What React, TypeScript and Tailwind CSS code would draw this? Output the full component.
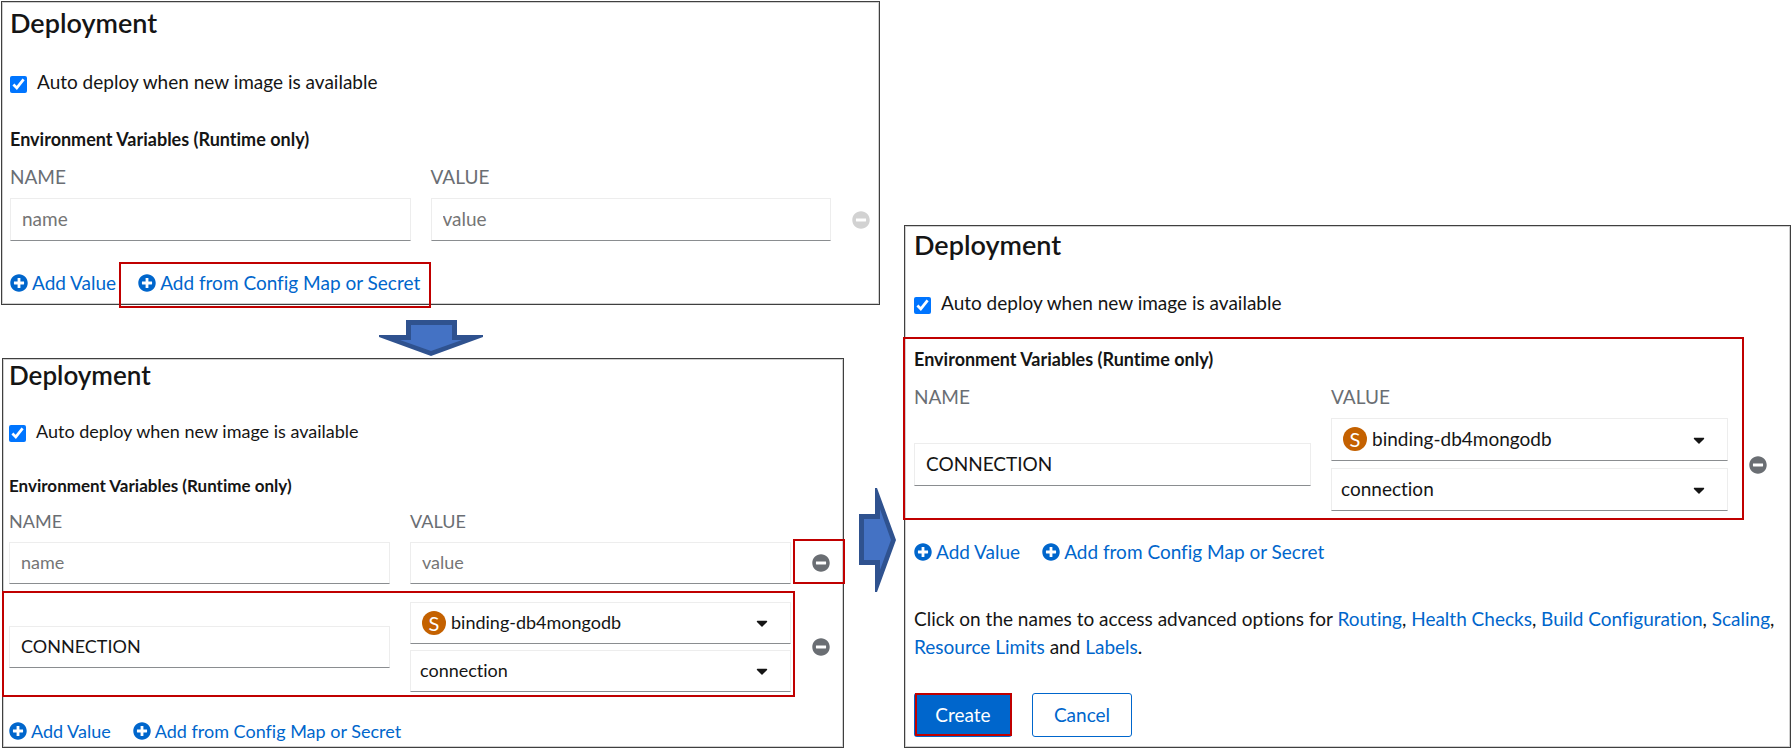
import type { ReactNode } from "react";
import { FaCaretDown, FaMinusCircle, FaPlusCircle } from "react-icons/fa";

type Size = "lg" | "md";

const fieldBox =
  "w-full min-w-0 rounded-none border border-[#ededed] border-b-[#8a8d90] bg-white pb-0.5 text-[#151515] placeholder:text-[#757575] outline-none";
const fieldHeight = { lg: "h-[43px]", md: "h-[42px]" };

function Highlight({ className }: { className: string }) {
  return <span aria-hidden="true" className={"pointer-events-none absolute z-10 border-2 border-[#c00000] " + className} />;
}

function Panel({ size, className, children }: { size: Size; className: string; children: ReactNode }) {
  const text = size === "lg" ? "text-[19px]" : "text-[18px]";
  return (
    <section className={"border border-[#3f3f3f] leading-7 shadow-[inset_0_0_0_1px_#d0d0d0] " + text + " " + className}>
      {children}
    </section>
  );
}

function Title({ size }: { size: Size }) {
  return (
    <h2 className={"font-semibold leading-8 " + (size === "lg" ? "text-[27px]" : "text-[26px]")}>Deployment</h2>
  );
}

function AutoDeploy({ id, className }: { id: string; className: string }) {
  return (
    <div className={"flex items-start gap-2.5 " + className}>
      <input id={id} type="checkbox" defaultChecked className="mt-2 size-[17px] accent-[#0075ff]" />
      <label htmlFor={id}>Auto deploy when new image is available</label>
    </div>
  );
}

function EnvHeading({ size, className }: { size: Size; className: string }) {
  return (
    <h3 className={"font-bold " + (size === "lg" ? "text-[18px] " : "text-[17px] ") + className}>
      Environment Variables (Runtime only)
    </h3>
  );
}

function Row({ cell, className, children }: { cell: string; className: string; children: ReactNode }) {
  return <div className={"relative grid items-center " + cell + " " + className}>{children}</div>;
}

function ColumnLabels({ cell, id, className }: { cell: string; id: string; className: string }) {
  return (
    <Row cell={cell} className={"text-[#6a6e73] " + className}>
      <label htmlFor={id + "-name"}>NAME</label>
      <label htmlFor={id + "-value"}>VALUE</label>
    </Row>
  );
}

function RemoveButton({ disabled, children }: { disabled?: boolean; children?: ReactNode }) {
  return (
    <div className="relative -ml-5 flex h-full items-center pl-[21px]">
      <button
        type="button"
        aria-label="Remove"
        disabled={disabled}
        className={"text-[18px] " + (disabled ? "text-[#d2d2d2]" : "text-[#6a6e73]")}
      >
        <FaMinusCircle />
      </button>
      {children}
    </div>
  );
}

function SelectField({ id, label, value, badge, size }: { id?: string; label: string; value: string; badge?: string; size: Size }) {
  return (
    <div className="relative">
      <select
        id={id}
        aria-label={label}
        className={fieldBox + " appearance-none pr-12 " + fieldHeight[size] + (badge ? " pl-10" : " pl-[9px]")}
      >
        <option>{value}</option>
      </select>
      {badge && (
        <span className="pointer-events-none absolute inset-y-0 left-3 flex items-center pb-px">
          <span className="flex size-6 items-center justify-center rounded-full bg-[#c46100] text-[20px] leading-none text-white">
            {badge}
          </span>
        </span>
      )}
      <FaCaretDown className="pointer-events-none absolute right-5 top-1/2 -translate-y-1/2 text-[18px]" />
    </div>
  );
}

function AddLinks({ className, highlight }: { className: string; highlight?: boolean }) {
  return (
    <div className={"flex gap-[22px] text-[#0066cc] " + className}>
      <button type="button" className="flex items-center gap-1">
        <FaPlusCircle className="text-[18px]" />
        Add Value
      </button>
      <button type="button" className="relative flex items-center gap-1">
        <FaPlusCircle className="text-[18px]" />
        Add from Config Map or Secret
        {highlight && <Highlight className="-bottom-[11px] -left-[19px] -right-[11px] -top-[7px]" />}
      </button>
    </div>
  );
}

function A({ children }: { children: ReactNode }) {
  return (
    <a href="#" className="text-[#0066cc]">
      {children}
    </a>
  );
}

const cellsA = "grid-cols-[1fr_1fr_28px] gap-x-5";
const cellsB = "grid-cols-[1fr_1fr_32px] gap-x-5";
const cellsC = "grid-cols-[1fr_1fr_42px] gap-x-5";

export default function App() {
  return (
    <main className="grid grid-cols-[minmax(0,843fr)_minmax(0,36fr)_minmax(0,24fr)_minmax(0,887fr)] bg-white px-px pt-px font-[Lato,sans-serif] text-[#151515] [font-variant-ligatures:none]">
      <Panel size="lg" className="col-span-2 pb-[7px] pl-2 pt-[5px]">
        <Title size="lg" />
        <AutoDeploy id="a-auto" className="mt-[29px]" />
        <EnvHeading size="lg" className="mt-[29px]" />
        <ColumnLabels cell={cellsA} id="a" className="mt-2.5" />
        <Row cell={cellsA} className="mt-[7px]">
          <input id="a-name" placeholder="name" className={fieldBox + " h-[43px] px-[11px]"} />
          <input id="a-value" placeholder="value" className={fieldBox + " h-[43px] px-[11px]"} />
          <RemoveButton disabled />
        </Row>
        <AddLinks className="mt-7" highlight />
      </Panel>

      <div className="col-start-1 row-start-2 flex justify-center pb-0.5 pl-4 pt-[15px]">
        <svg width="104" height="36" viewBox="0 0 104 36" aria-hidden="true">
          <path d="M27 0H78V15H104V17L52 36L0 17V15H27Z" fill="#2f528f" />
          <path d="M32 5H73V20H83L52 31L21 20H32Z" fill="#4472c4" />
        </svg>
      </div>

      <Panel size="md" className="col-start-1 row-start-3 ml-px pb-0.5 pl-1.5">
        <Title size="md" />
        <AutoDeploy id="b-auto" className="mt-[26px]" />
        <EnvHeading size="md" className="mt-[27px]" />
        <ColumnLabels cell={cellsB} id="b" className="mt-[7px]" />
        <Row cell={cellsB} className="mt-[7px]">
          <input id="b-name" placeholder="name" className={fieldBox + " h-[42px] px-[11px]"} />
          <input id="b-value" placeholder="value" className={fieldBox + " h-[42px] px-[11px]"} />
          <RemoveButton>
            <Highlight className="-right-0.5 -top-[3px] bottom-0 left-0.5" />
          </RemoveButton>
        </Row>
        <Row cell={cellsB} className="mt-[18px]">
          <input aria-label="Name" defaultValue="CONNECTION" className={fieldBox + " h-[42px] px-[11px]"} />
          <div className="grid gap-1.5">
            <SelectField size="md" label="Resource" value="binding-db4mongodb" badge="S" />
            <SelectField size="md" label="Key" value="connection" />
          </div>
          <RemoveButton />
          <Highlight className="-bottom-[5px] -left-[7px] -top-[11px] right-12" />
        </Row>
        <AddLinks className="mt-[25px]" />
      </Panel>

      <div className="col-span-2 col-start-2 row-start-3 flex items-center justify-center pb-[26px] pl-1.5">
        <svg width="37" height="104" viewBox="0 0 37 104" aria-hidden="true">
          <path d="M0 26H16V0H18L37 52L18 104H16V77H0Z" fill="#2f528f" />
          <path d="M5 31H21V21L32 52L21 82V72H5Z" fill="#4472c4" />
        </svg>
      </div>

      <Panel size="lg" className="col-start-4 row-span-3 row-start-1 self-end pb-2.5 pl-[9px] pt-[3px]">
        <Title size="lg" />
        <AutoDeploy id="c-auto" className="mt-7" />
        <div className="relative mt-7">
          <EnvHeading size="lg" className="" />
          <ColumnLabels cell={cellsC} id="c" className="mt-2.5" />
          <Row cell={cellsC} className="mt-[7px]">
            <input id="c-name" defaultValue="CONNECTION" className={fieldBox + " h-[43px] px-[11px]"} />
            <div className="grid gap-[7px]">
              <SelectField size="lg" id="c-value" label="Resource" value="binding-db4mongodb" badge="S" />
              <SelectField size="lg" label="Key" value="connection" />
            </div>
            <RemoveButton />
          </Row>
          <Highlight className="-bottom-[9px] -left-[11px] -top-2 right-[46px]" />
        </div>
        <AddLinks className="mt-[27px]" />
        <p className="mt-[39px]">
          Click on the names to access advanced options for <A>Routing</A>, <A>Health Checks</A>,{" "}
          <A>Build Configuration</A>, <A>Scaling</A>, <A>Resource Limits</A> and <A>Labels</A>.
        </p>
        <div className="mt-8 flex gap-5">
          <button type="button" className="relative h-11 w-[98px] rounded-[3px] bg-[#0066cc] text-white">
            Create
            <Highlight className="bottom-px left-px right-0 top-0" />
          </button>
          <button type="button" className="h-11 w-[100px] rounded-[3px] border border-[#0066cc] text-[#0066cc]">
            Cancel
          </button>
        </div>
      </Panel>
    </main>
  );
}
